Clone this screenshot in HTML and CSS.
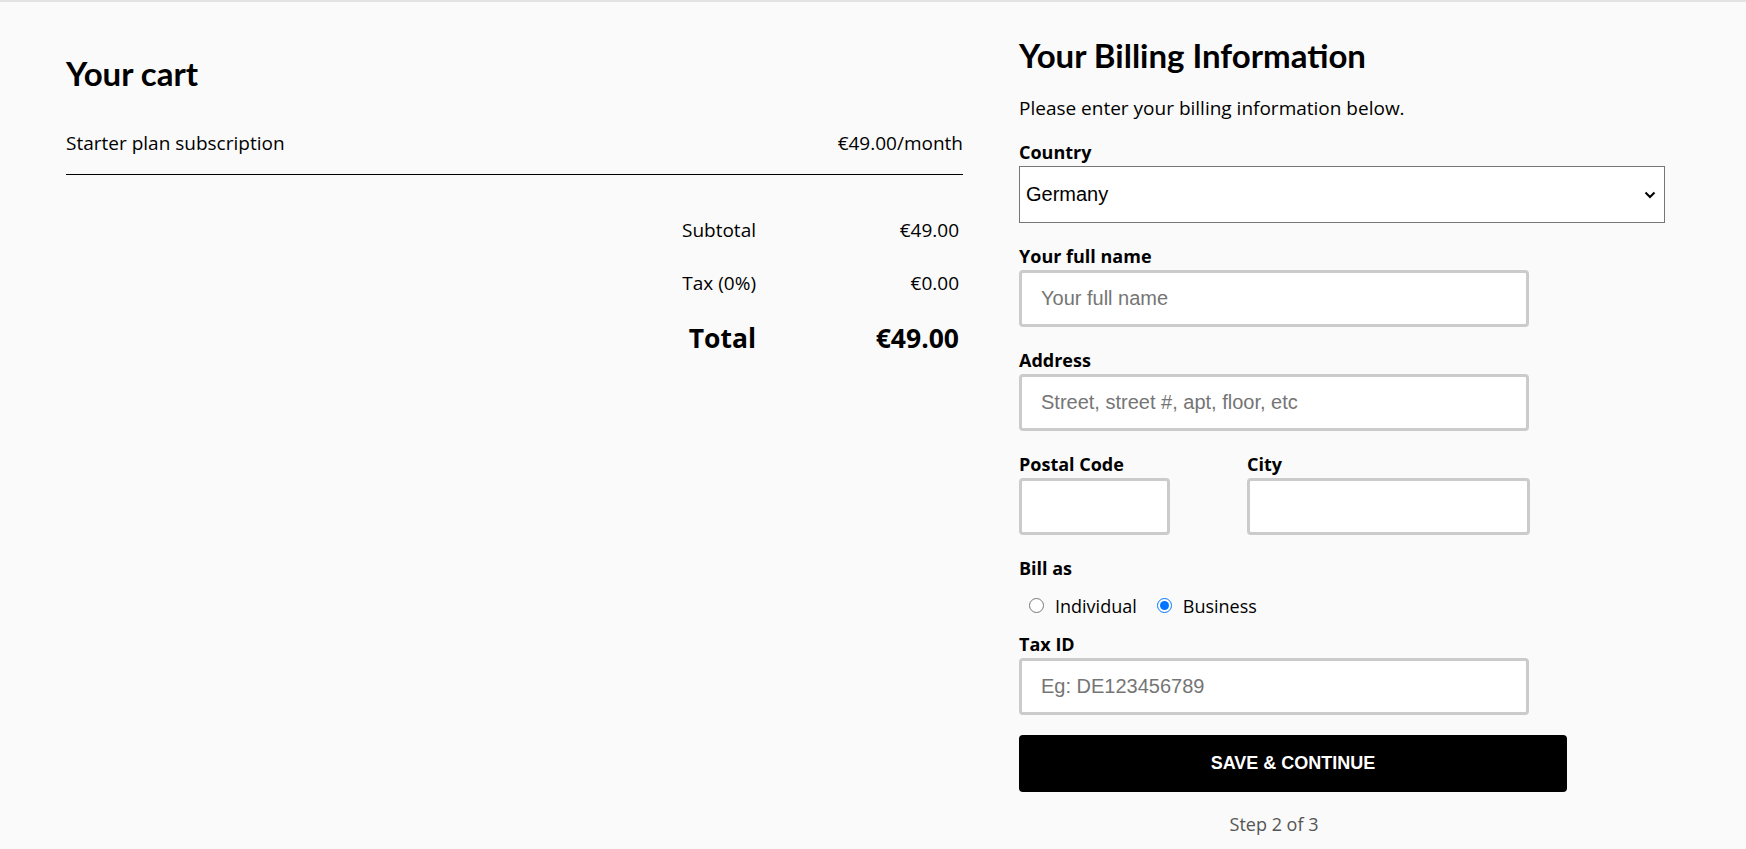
FILE: index.html
```html
<!DOCTYPE html>
<html lang="en">
<head>
    <meta charset="UTF-8">
    <meta name="viewport" content="width=device-width, initial-scale=1.0">
    <title>Checkout - Billing</title>
    <link rel="stylesheet" href="styles.css">
</head>
<body>
    <div class="checkout">
        <!-- Cart summary -->
        <section class="cart">
            <h1 class="cart-title">Your cart</h1>
            <div class="cart-item">
                <span>Starter plan subscription</span>
                <span>€49.00/month</span>
            </div>
            <div class="totals">
                <span class="totals-label">Subtotal</span>
                <span class="totals-value">€49.00</span>
                <span class="totals-label">Tax (0%)</span>
                <span class="totals-value">€0.00</span>
                <span class="totals-label grand">Total</span>
                <span class="totals-value grand">€49.00</span>
            </div>
        </section>

        <!-- Billing form -->
        <section class="billing">
            <h2 class="billing-title">Your Billing Information</h2>
            <p class="intro">Please enter your billing information below.</p>
            <form id="billing-form">
                <div class="field">
                    <label for="country">Country</label>
                    <div class="select-wrap">
                        <select id="country" class="country-select">
                            <option>Germany</option>
                            <option>France</option>
                            <option>Spain</option>
                        </select>
                        <svg class="chevron" width="12" height="8" viewBox="0 0 12 8">
                            <path d="M1.5 1.5 L6 6 L10.5 1.5" fill="none" stroke="#000" stroke-width="2"/>
                        </svg>
                    </div>
                </div>
                <div class="field">
                    <label for="name">Your full name</label>
                    <input type="text" id="name" class="text-input" placeholder="Your full name">
                </div>
                <div class="field">
                    <label for="address">Address</label>
                    <input type="text" id="address" class="text-input" placeholder="Street, street #, apt, floor, etc">
                </div>
                <div class="field field-row">
                    <div class="postal">
                        <label for="postal">Postal Code</label>
                        <input type="text" id="postal" class="text-input">
                    </div>
                    <div class="city">
                        <label for="city">City</label>
                        <input type="text" id="city" class="text-input">
                    </div>
                </div>
                <div class="field-radio">
                    <label>Bill as</label>
                    <div class="radio-row">
                        <input type="radio" id="individual" name="billas" value="individual">
                        <label for="individual" class="radio-label">Individual</label>
                        <input type="radio" id="business" name="billas" value="business" checked>
                        <label for="business" class="radio-label">Business</label>
                    </div>
                </div>
                <div class="field">
                    <label for="taxid">Tax ID</label>
                    <input type="text" id="taxid" class="text-input" placeholder="Eg: DE123456789">
                </div>
                <button type="submit" class="save-btn">SAVE &amp; CONTINUE</button>
                <p class="step">Step 2 of 3</p>
            </form>
        </section>
    </div>
</body>
</html>
```

FILE: styles.css
```css
body {
    margin: 0;
    border-top: 2px solid #e3e3e3;
    background: #fafafa;
    font-family: "Open Sans", Arial, sans-serif;
    font-size: 19px;
    color: #000;
}
.checkout {
    display: flex;
    padding: 0 66px;
}
.cart {
    width: 897px;
    padding-top: 52px;
}
.cart-title,
.billing-title {
    font-family: Lato, "Open Sans", sans-serif;
    font-weight: 700;
    line-height: 1.2;
    margin: 0;
}
.cart-title {
    font-size: 33px;
}
.cart-item {
    display: flex;
    justify-content: space-between;
    margin-top: 35px;
    padding-bottom: 17px;
    line-height: 28px;
    border-bottom: 1px solid #000;
}
.totals {
    display: grid;
    grid-template-columns: auto 203px;
    justify-content: end;
    row-gap: 25px;
    margin-top: 41px;
    margin-right: 4px;
    line-height: 28px;
    text-align: right;
}
.totals .grand {
    font-weight: 700;
    font-size: 26.5px;
    line-height: 32px;
}
.billing {
    width: 646px;
    margin-left: 56px;
    padding-top: 34px;
}
.billing-title {
    font-size: 33px;
}
.intro {
    margin: 18px 0 18px;
    line-height: 28px;
}
label {
    display: block;
    font-size: 18px;
    font-weight: 700;
    line-height: 24px;
    margin-bottom: 2px;
}
.field {
    margin-bottom: 21px;
}
.select-wrap {
    position: relative;
    width: 646px;
}
.country-select {
    display: block;
    box-sizing: border-box;
    width: 646px;
    height: 57px;
    padding: 0 6px;
    border: 1px solid #767676;
    border-radius: 0;
    background: #fff;
    appearance: none;
    font-family: "Liberation Sans", Arial, sans-serif;
    font-size: 20px;
    color: #000;
}
.chevron {
    position: absolute;
    right: 9px;
    top: 25px;
    pointer-events: none;
}
.text-input {
    display: block;
    box-sizing: border-box;
    width: 510px;
    height: 57px;
    padding: 0 19px;
    border: 3px solid #cbcbcb;
    border-radius: 4px;
    background: #fff;
    font-family: "Liberation Sans", Arial, sans-serif;
    font-size: 20px;
}
.text-input::placeholder {
    color: #757575;
}
.field-row {
    display: flex;
    gap: 77px;
}
.postal .text-input {
    width: 151px;
}
.city .text-input {
    width: 283px;
}
.field-radio {
    margin-bottom: 12px;
}
.radio-row {
    display: flex;
    align-items: center;
    height: 28px;
    margin-top: 12px;
}
.radio-row input {
    width: 15px;
    height: 15px;
    margin: 0 0 0 10px;
}
.radio-row input + .radio-label {
    margin: 0 0 0 11px;
}
#business {
    margin-left: 20px;
}
.radio-label {
    display: inline;
    font-weight: 400;
    font-size: 18px;
    line-height: 28px;
}
.save-btn {
    display: block;
    width: 548px;
    height: 57px;
    margin-top: -1px;
    border: none;
    border-radius: 4px;
    background: #000;
    color: #fff;
    font-family: "Liberation Sans", Arial, sans-serif;
    font-weight: 700;
    font-size: 18px;
    cursor: pointer;
}
.step {
    width: 510px;
    margin: 18px 0 0;
    text-align: center;
    line-height: 28px;
    color: #555;
    font-size: 18px;
}
```
